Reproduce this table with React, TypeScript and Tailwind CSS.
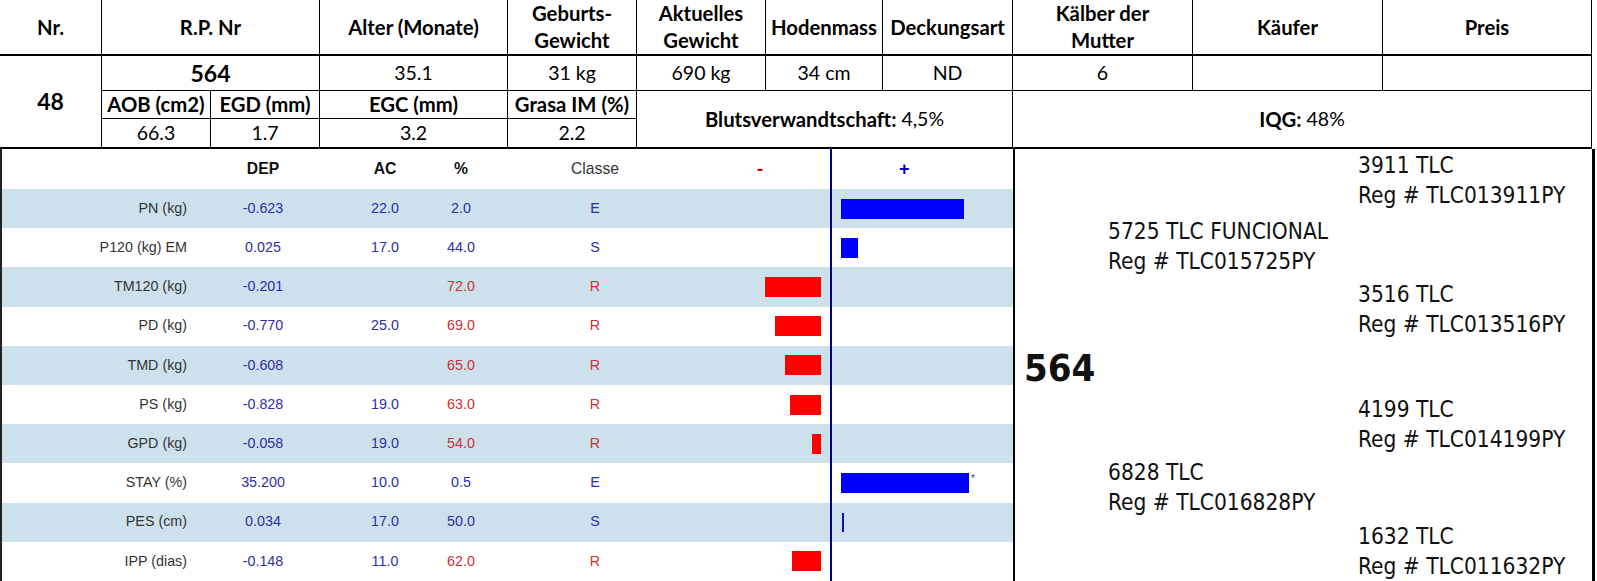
import React from "react";

type Row = {
  label: string;
  dep: string;
  ac: string;
  pct: string;
  cls: string;
  neg?: number;
  pos?: number;
  star?: boolean;
  thin?: boolean;
};

const rows: Row[] = [
  { label: "PN (kg)", dep: "-0.623", ac: "22.0", pct: "2.0", cls: "E", pos: 123 },
  { label: "P120 (kg) EM", dep: "0.025", ac: "17.0", pct: "44.0", cls: "S", pos: 17 },
  { label: "TM120 (kg)", dep: "-0.201", ac: "", pct: "72.0", cls: "R", neg: 56 },
  { label: "PD (kg)", dep: "-0.770", ac: "25.0", pct: "69.0", cls: "R", neg: 46 },
  { label: "TMD (kg)", dep: "-0.608", ac: "", pct: "65.0", cls: "R", neg: 36 },
  { label: "PS (kg)", dep: "-0.828", ac: "19.0", pct: "63.0", cls: "R", neg: 31 },
  { label: "GPD (kg)", dep: "-0.058", ac: "19.0", pct: "54.0", cls: "R", neg: 9 },
  { label: "STAY (%)", dep: "35.200", ac: "10.0", pct: "0.5", cls: "E", pos: 128, star: true },
  { label: "PES (cm)", dep: "0.034", ac: "17.0", pct: "50.0", cls: "S", pos: 2, thin: true },
  { label: "IPP (dias)", dep: "-0.148", ac: "11.0", pct: "62.0", cls: "R", neg: 29 },
];

const cell = "flex items-center justify-center text-center border-r border-black";
const head = `${cell} font-bold text-[20.3px] leading-[27px] border-b-2`;
const val = `${cell} text-[19.5px] border-b`;
const sub = `${cell} font-bold text-[20.3px] border-b`;
const sub2 = `${cell} text-[19.5px] border-b-2`;

const rowGrid =
  "grid grid-cols-[185px_152px_92px_60px_208px_122px_9px_2px_9px_1fr] items-center";

function ChartRow({ r, band }: { r: Row; band: boolean }) {
  const bad = r.cls === "R";
  return (
    <div className={`${rowGrid} h-[39.2px] ${band ? "bg-[#cde1ec]" : "bg-white"} text-[14.3px]`}>
      <div className="text-right text-[#333333]">{r.label}</div>
      <div className="text-center text-[#2e2eaa]">{r.dep}</div>
      <div className="text-center text-[#2e2eaa]">{r.ac}</div>
      <div className={`text-center ${bad ? "text-[#cf3030]" : "text-[#2e2eaa]"}`}>{r.pct}</div>
      <div className={`text-center ${bad ? "text-[#cf3030]" : "text-[#2e2eaa]"}`}>{r.cls}</div>
      <div className="flex justify-end items-center h-full">
        {r.neg ? <div className="h-[20px] bg-[#ff0000]" style={{ width: r.neg }} /> : null}
      </div>
      <div />
      <div className="h-full bg-[#000080]" />
      <div />
      <div className="flex items-center h-full">
        {r.pos ? (
          r.thin ? (
            <div className="h-[19px] w-[2px] bg-[#1010c0] ml-[1px]" />
          ) : (
            <div className="h-[20px] bg-[#0000ff]" style={{ width: r.pos }} />
          )
        ) : null}
        {r.star ? (
          <span className="text-[10px] leading-none text-[#3333aa] ml-[2px] -mt-[8px]">*</span>
        ) : null}
      </div>
    </div>
  );
}

function Ped({ name, reg, className }: { name: string; reg: string; className: string }) {
  return (
    <div className={`leading-[30px] whitespace-nowrap ${className}`}>
      <div>{name}</div>
      <div>{reg}</div>
    </div>
  );
}

export default function App() {
  return (
    <div className="w-[1597px] h-[581px] overflow-hidden bg-white text-black font-[family-name:Lato,'Noto_Sans',sans-serif]">
      {/* top table */}
      <div className="grid w-[1592px] grid-cols-[102px_109px_109px_188px_129px_129px_117px_130px_180px_190px_209px] grid-rows-[56px_35px_28px_30px]">
        <div className={`${head} col-start-1 row-start-1`}>Nr.</div>
        <div className={`${head} col-start-2 col-span-2 row-start-1`}>R.P. Nr</div>
        <div className={`${head} col-start-4 row-start-1`}>Alter (Monate)</div>
        <div className={`${head} col-start-5 row-start-1`}>
          Geburts-
          <br />
          Gewicht
        </div>
        <div className={`${head} col-start-6 row-start-1`}>
          Aktuelles
          <br />
          Gewicht
        </div>
        <div className={`${head} col-start-7 row-start-1`}>Hodenmass</div>
        <div className={`${head} col-start-8 row-start-1`}>Deckungsart</div>
        <div className={`${head} col-start-9 row-start-1`}>
          Kälber der
          <br />
          Mutter
        </div>
        <div className={`${head} col-start-10 row-start-1`}>Käufer</div>
        <div className={`${head} col-start-11 row-start-1`}>Preis</div>

        <div className={`${cell} col-start-1 row-start-2 row-span-3 border-b-2 font-bold text-[23px]`}>48</div>
        <div className={`${cell} col-start-2 col-span-2 row-start-2 border-b font-bold text-[23px]`}>564</div>
        <div className={`${val} col-start-4 row-start-2`}>35.1</div>
        <div className={`${val} col-start-5 row-start-2`}>31 kg</div>
        <div className={`${val} col-start-6 row-start-2`}>690 kg</div>
        <div className={`${val} col-start-7 row-start-2`}>34 cm</div>
        <div className={`${val} col-start-8 row-start-2`}>ND</div>
        <div className={`${val} col-start-9 row-start-2`}>6</div>
        <div className={`${val} col-start-10 row-start-2`}></div>
        <div className={`${val} col-start-11 row-start-2`}></div>

        <div className={`${sub} col-start-2 row-start-3`}>AOB (cm2)</div>
        <div className={`${sub} col-start-3 row-start-3`}>EGD (mm)</div>
        <div className={`${sub} col-start-4 row-start-3`}>EGC (mm)</div>
        <div className={`${sub} col-start-5 row-start-3`}>Grasa IM (%)</div>
        <div className={`${cell} col-start-6 col-span-3 row-start-3 row-span-2 border-b-2 text-[19.5px]`}>
          <span className="font-bold text-[20.3px]">Blutsverwandtschaft:</span>&nbsp;4,5%
        </div>
        <div className={`${cell} col-start-9 col-span-3 row-start-3 row-span-2 border-b-2 text-[19.5px]`}>
          <span className="font-bold text-[20.3px]">IQG:</span>&nbsp;48%
        </div>

        <div className={`${sub2} col-start-2 row-start-4`}>66.3</div>
        <div className={`${sub2} col-start-3 row-start-4`}>1.7</div>
        <div className={`${sub2} col-start-4 row-start-4`}>3.2</div>
        <div className={`${sub2} col-start-5 row-start-4`}>2.2</div>
      </div>

      {/* lower part */}
      <div className="flex">
        <div className="w-[1013px] border-l-2 border-[#222222] flex flex-col font-[family-name:'Liberation_Sans',Arial,sans-serif]">
          <div className={`${rowGrid} h-[40px] bg-white`}>
            <div />
            <div className="text-center font-bold text-[15.7px] text-[#111111]">DEP</div>
            <div className="text-center font-bold text-[15.7px] text-[#111111]">AC</div>
            <div className="text-center font-bold text-[15.7px] text-[#111111]">%</div>
            <div className="text-center text-[15.7px] text-[#333333]">Classe</div>
            <div className="text-center font-bold text-[18px] text-[#cc0000]">-</div>
            <div />
            <div className="h-full bg-[#000080]" />
            <div />
            <div className="pl-[58px] font-bold text-[18px] text-[#0000cc]">+</div>
          </div>
          {rows.map((r, i) => (
            <ChartRow key={r.label} r={r} band={i % 2 === 0} />
          ))}
        </div>

        <div className="w-[582px] h-[460px] border-l-2 border-r-[3px] border-black flex text-[22.5px] text-[#111111] font-[family-name:'DejaVu_Sans_Condensed','DejaVu_Sans',sans-serif] font-stretch-condensed">
          <div className="w-[93px] pl-[9px] shrink-0">
            <div className="mt-[198px] font-bold text-[38px] leading-[42px]">564</div>
          </div>
          <div className="w-[250px] shrink-0 flex flex-col">
            <Ped className="mt-[67px]" name="5725 TLC FUNCIONAL" reg="Reg # TLC015725PY" />
            <Ped className="mt-[181px]" name="6828 TLC" reg="Reg # TLC016828PY" />
          </div>
          <div className="flex-1 flex flex-col">
            <Ped className="mt-[1px]" name="3911 TLC" reg="Reg # TLC013911PY" />
            <Ped className="mt-[69px]" name="3516 TLC" reg="Reg # TLC013516PY" />
            <Ped className="mt-[55px]" name="4199 TLC" reg="Reg # TLC014199PY" />
            <Ped className="mt-[67px]" name="1632 TLC" reg="Reg # TLC011632PY" />
          </div>
        </div>
      </div>
    </div>
  );
}
